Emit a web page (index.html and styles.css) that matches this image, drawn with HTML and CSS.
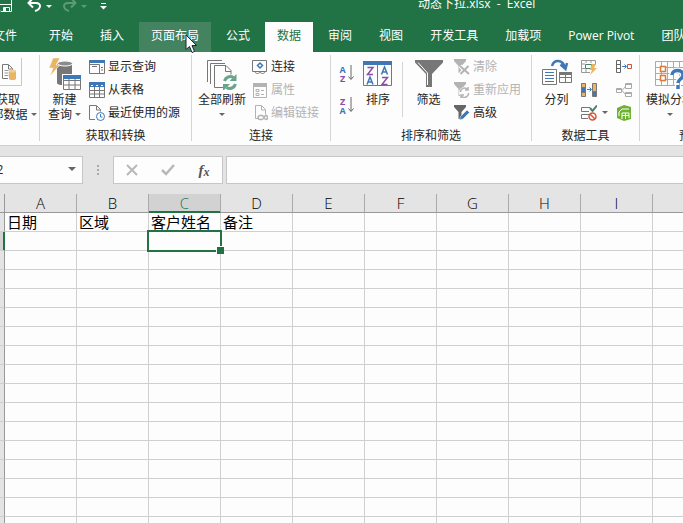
FILE: index.html
```html
<!DOCTYPE html>
<html lang="zh-CN">
  <head>
    <meta charset="utf-8" />
    <title>动态下拉.xlsx - Excel</title>
    <link rel="stylesheet" href="styles.css">
  </head>
  <body>
    <header class="titlebar">
      <div class="quick-access">
        <button class="quick-button" aria-label="保存">
          <svg width="12" height="12" viewBox="0 0 12 12" fill="none" stroke="#fff"><path d="M0 4.500h11.500V-1M11.500 4v7.500H1L0 10.500M3.500 11.500v-4h6v4" /><path d="M5 8v3" stroke-width="2" /></svg>
        </button>
        <button class="quick-button" aria-label="撤消">
          <svg width="15" height="12" viewBox="0 0 15 12" fill="none" stroke="#fff" stroke-width="2"><path d="M6-2 1.500 3 6 7.500M2 3h7c5.500 0 5.500 6-1 8" /></svg>
        </button>
        <span class="caret"></span>
        <button class="quick-button redo" aria-label="恢复" disabled>
          <svg width="15" height="12" viewBox="0 0 15 12" fill="none" stroke="#5d9a78" stroke-width="2"><path d="M9-2l4.500 5L9 7.500M13 3H6c-5.500 0-5.500 6 1 8" /></svg>
        </button>
        <span class="caret dim"></span>
        <button class="quick-button customize" aria-label="自定义快速访问工具栏">
          <svg width="7" height="7" viewBox="0 0 7 7"><path d="M1 .5h5" stroke="#fff" /><path d="M0 3h7L3.500 6.500z" fill="#fff" /></svg>
        </button>
      </div>
      <h1 class="doc-title">动态下拉.xlsx&nbsp; -&nbsp; Excel</h1>
    </header>

    <nav class="tabs">
      <button class="tab file">文件</button>
      <button class="tab">开始</button>
      <button class="tab">插入</button>
      <button class="tab hover">页面布局
        <svg class="cursor" width="14" height="20" viewBox="0 0 14 20"><path d="M1 1v14.500l3.500-3 2.500 6 2.500-1-2.500-6h4.500z" fill="#fff" stroke="#1b2430" /></svg>
      </button>
      <button class="tab">公式</button>
      <button class="tab active">数据</button>
      <button class="tab">审阅</button>
      <button class="tab">视图</button>
      <button class="tab">开发工具</button>
      <button class="tab">加载项</button>
      <button class="tab">Power Pivot</button>
      <button class="tab">团队</button>
    </nav>

    <main class="ribbon">
      <section class="group external">
        <div class="group-body">
          <button class="large">
            <svg width="28" height="32" viewBox="0 0 28 32"><path d="M.5-1.500h27v29H.5z" fill="#fdfdfd" stroke="#c8c8c8" /><g fill="none" stroke="#777"><path d="M14 20.500H8.500v-14h6l4 4v2M14.500 7v4h4" /><path d="M10.500 12.500h4M10.500 15h4M10.500 17.500h4" stroke="#999" /></g><path d="M15 13v7.500c0 2 7 2 7 0V13z" fill="#e8b564" /><ellipse cx="18.500" cy="13" rx="3.500" ry="1.500" fill="#f1cd91" /></svg>
            <span>获取</span>
            <span class="with-caret">外部数据<i class="caret"></i></span>
          </button>
        </div>
      </section>

      <section class="group transform">
        <div class="group-body">
          <button class="large">
            <svg width="32" height="32" viewBox="0 0 32 32"><path d="M8 6v19c0 3 15 3 15 0V6z" fill="#777" /><ellipse cx="16" cy="5.500" rx="7.500" ry="2.500" fill="#8b8b8b" stroke="#fff" /><path d="M4 0h7L7 7h4L1 18l3-8H0z" fill="#e8b564" stroke="#fff" stroke-width=".5" /><path d="M13 16h19v16H13z" fill="#fff" /><path d="M14.500 17.500h17v14h-17zM15 22.500h16M15 27h16M20 21v10M26 21v10" fill="none" stroke="#777" /><path d="M14 17h18v4H14z" fill="#3f78b5" /></svg>
            <span>新建</span>
            <span class="with-caret">查询<i class="caret"></i></span>
          </button>
          <div class="stack">
            <button class="small">
              <svg width="16" height="16" viewBox="0 0 16 16"><path d="M.5 1.500h15v13H.5zM1 5.500h9.500v9M3 7.500h5M12 8.500h2M12 11h2" fill="none" stroke="#777" /><path d="M0 1h16v3H0z" fill="#3f78b5" /></svg>
              显示查询
            </button>
            <button class="small">
              <svg width="16" height="16" viewBox="0 0 16 16"><path d="M.5 1.500h15v14H.5zM1 8.500h14M1 12h14M5.500 5v10M10.500 5v10" fill="none" stroke="#777" /><path d="M0 0h16v5H0z" fill="#3f78b5" /><path d="M2 3.500h2M7 3.500h2M12 3.500h2" stroke="#fff" /></svg>
              从表格
            </button>
            <button class="small">
              <svg width="16" height="16" viewBox="0 0 16 16" fill="none"><path d="M6 14.500H.5V.5h7l4 4v2M7.500 1v4h4" stroke="#777" /><circle cx="11.500" cy="11.500" r="4" stroke="#3f78b5" /><path d="M11.500 9v3h2" stroke="#3f78b5" /></svg>
              最近使用的源
            </button>
          </div>
        </div>
        <h2 class="group-label">获取和转换</h2>
      </section>

      <section class="group connections">
        <div class="group-body">
          <button class="large">
            <svg width="30" height="32" viewBox="0 0 30 32" fill="none"><path d="M.5 24V2.500H15M3.500 26V5.500H18M17 29.500H7.500V7.500H19l5 5v4M18.500 8v5.500H24" stroke="#777" /><path d="M17.500 23a6 6 0 0 1 9-3.500M28.500 26a6 6 0 0 1-9 3.500" stroke="#69a58d" stroke-width="3" /><path d="M29.500 16v7h-7zM16 33v-7h7z" fill="#69a58d" /></svg>
            <span>全部刷新</span>
            <span><i class="caret"></i></span>
          </button>
          <div class="stack">
            <button class="small">
              <svg width="16" height="16" viewBox="0 0 16 16" fill="none"><path d="M3 12.500H.5v-11h14v11H13M2 12.500h11M3 13c1 2 4 2 5 0 1 2 4 2 5 0" stroke="#777" /><path d="M8 4l2.500 2.500L8 9 5.500 6.500z" stroke="#3f78b5" stroke-width="1.500" /></svg>
              连接
            </button>
            <button class="small" disabled>
              <svg width="16" height="16" viewBox="0 0 16 16" fill="none" stroke="#b3b3b3"><path d="M1.500 1.500h13v14h-13z" /><path d="M1 3h14" stroke-width="4" /><path d="M4 7.500h3v2H4zM4 11.500h3v2H4zM9 8.500h3M9 12.500h3" /></svg>
              属性
            </button>
            <button class="small" disabled>
              <svg width="16" height="16" viewBox="0 0 16 16" fill="none" stroke="#b3b3b3"><path d="M6 13.500H3.500V.5h6l4 4v5M9.500 1v4h4" /><path d="M8 10.500h2c2 0 2 4 4 4s2-4 0-4-2 4-4 4H8c-2.500 0-2.500-4 0-4z" stroke-width="1.500" /></svg>
              编辑链接
            </button>
          </div>
        </div>
        <h2 class="group-label">连接</h2>
      </section>

      <section class="group sort">
        <div class="group-body">
          <div class="order-buttons">
            <button class="order" aria-label="升序">
              <span class="letters"><b>A</b><b class="violet">Z</b></span>
              <svg width="6" height="16" viewBox="0 0 6 16"><path d="M3 0v14M.5 11.500 3 14.500l2.500-3" fill="none" stroke="#666" /></svg>
            </button>
            <button class="order" aria-label="降序">
              <span class="letters"><b class="violet">Z</b><b>A</b></span>
              <svg width="6" height="16" viewBox="0 0 6 16"><path d="M3 0v14M.5 11.500 3 14.500l2.500-3" fill="none" stroke="#666" /></svg>
            </button>
          </div>
          <button class="large">
            <svg width="30" height="32" viewBox="0 0 30 32" fill="none" stroke-width="1.500"><path d="M.5 3.500h28v24H.5zM14.500 6v21" stroke="#777" stroke-width="1" /><path d="M0 3h29v4H0z" fill="#3f78b5" /><path d="M4.500 9.500H10l-5.500 7H10M19 19.500h5.500l-5.500 7h5.500" stroke="#8a4fa5" /><path d="M4 26.500l3-7.500 3 7.500M5 24h4M18.500 16.500l3-7.500 3 7.500M19.500 14h4" stroke="#3f78b5" /></svg>
            <span>排序</span>
          </button>
          <button class="large filter">
            <svg width="28" height="32" viewBox="0 0 28 32"><path d="M0 2h28v2.500L17 16v13h-6V16L0 4.500z" fill="#777" /><path d="M3 4.500l9.500 10.500v12" fill="none" stroke="#fff" /></svg>
            <span>筛选</span>
          </button>
          <div class="stack">
            <button class="small" disabled>
              <svg width="16" height="16" viewBox="0 0 16 16"><path d="M0 0h12v2L7.500 7v7h-3V7L0 2z" fill="#b3b3b3" /><path d="M6 7l9 8M14.500 7l-8 8" stroke="#fff" stroke-width="4" /><path d="M6 7l9 8M14.500 7l-8 8" stroke="#b3b3b3" stroke-width="2" /></svg>
              清除
            </button>
            <button class="small" disabled>
              <svg width="16" height="16" viewBox="0 0 16 16"><path d="M0 0h12v2L7.500 7v7h-3V7L0 2z" fill="#b3b3b3" /><circle cx="10.500" cy="10.500" r="5.500" fill="#fdfdfd" /><path d="M6.500 10a4 4 0 0 1 7-2.500M14.500 11a4 4 0 0 1-7 3M14 5v3h-3M7 16v-3h3" fill="none" stroke="#b3b3b3" stroke-width="1.500" /></svg>
              重新应用
            </button>
            <button class="small">
              <svg width="16" height="16" viewBox="0 0 16 16"><path d="M0 0h12v2L7.500 7v7h-3V7L0 2z" fill="#666" /><path d="M5.500 15l1-3.500L13 5l2.500 2.500L9 14z" fill="#3f78b5" stroke="#fff" stroke-width=".5" /></svg>
              高级
            </button>
          </div>
        </div>
        <h2 class="group-label">排序和筛选</h2>
      </section>

      <section class="group tools">
        <div class="group-body">
          <button class="large">
            <svg width="30" height="32" viewBox="0 0 30 32" fill="none"><path d="M.5 11.500h14v15H.5zM17.500 14.500h12v10h-12zM18 19.500h11M23.500 17v8" stroke="#777" /><path d="M17 15.500h13" stroke="#777" stroke-width="3" /><path d="M3 14.500h9M3 17.500h9M3 20.500h9M3 23.500h9" stroke="#3f78b5" /><path d="M10 8c2-7 11-7 13 2M18.500 6.500l5 4.500 1.500-6" stroke="#3f78b5" stroke-width="2.500" /></svg>
            <span>分列</span>
          </button>
          <div class="icon-grid">
            <button class="tool" aria-label="快速填充">
              <svg width="16" height="16" viewBox="0 0 16 16" fill="none"><path d="M9 13.500H.5v-12h14V6M1 5h3M1 9.500h3M5 2v2M10 2v2M5 10v3" stroke="#999" /><path d="M4.500 5.500h6v4h-6z" stroke="#47856b" /><path d="M11 5h4l-2 4h3l-7 7 2-5H8.500z" fill="#e8b564" /></svg>
            </button>
            <button class="tool" aria-label="合并计算">
              <svg width="16" height="16" viewBox="0 0 16 16" fill="none"><path d="M.5 1.500h4v12h-4zM1 5.500h3M1 9.500h3" stroke="#666" /><path d="M6 7.500h4M8.500 5.500l2 2-2 2" stroke="#3f78b5" /><path d="M11.500 5.500h4v4h-4z" stroke="#c9573b" /></svg>
            </button>
            <button class="tool" aria-label="删除重复项">
              <svg width="16" height="16" viewBox="0 0 16 16" fill="none"><path d="M.5 1.500h4v4h-4zM.5 10.500h4v4h-4z" fill="#e8b564" stroke="#777" /><path d="M.5 5.500h4v5h-4zM11.500 9.500h4v5h-4z" fill="#3f78b5" stroke="#777" /><path d="M11.500 1.500h4v8h-4z" fill="#e8b564" stroke="#777" /><path d="M6 7.500h4M8.500 5.500l2 2-2 2" stroke="#3f78b5" /></svg>
            </button>
            <button class="tool" aria-label="关系" disabled>
              <svg width="16" height="16" viewBox="0 0 16 16" fill="none" stroke="#aaa"><path d="M.5 6.500h5v4h-5zM9.500 1.500h6v5h-6zM9.500 10.500h6v4h-6zM6 8.500l3.500-4M6 8.500l3.500 4M1 7.500h4M10 2.500h5M10 11.500h5" /></svg>
            </button>
            <button class="tool" aria-label="数据验证">
              <svg width="16" height="16" viewBox="0 0 16 16" fill="none"><path d="M9 2.500H.5v4H8M8 9.500H.5v4H7" stroke="#777" /><path d="M9 3l2.500 3L16 .5" stroke="#47856b" stroke-width="2" /><circle cx="11.500" cy="11.500" r="3.500" stroke="#d65532" stroke-width="1.500" /><path d="M9 9l5 5" stroke="#d65532" stroke-width="1.500" /></svg>
              <i class="caret"></i>
            </button>
            <button class="tool" aria-label="管理数据模型">
              <svg width="16" height="16" viewBox="0 0 16 16"><path d="M1 3l7-3 7 2v12l-7 2-7-3z" fill="#6db330" /><path d="M3 11V7l3-3h7M6 14V8h7v5M6 10.500h7M9.500 8v6" fill="none" stroke="#fff" /></svg>
            </button>
          </div>
        </div>
        <h2 class="group-label">数据工具</h2>
      </section>

      <section class="group forecast">
        <div class="group-body">
          <button class="large">
            <svg width="30" height="32" viewBox="0 0 30 32" fill="none"><path d="M.5 3.500h29v24H.5zM1 9.500h28M1 15.500h28M1 21.500h28M6.500 4v23M12.500 4v23M18.500 4v23M24.500 4v23" stroke="#aaa" /><path d="M5.500 8.500h5v5h-5zM5.500 17.500h5v5h-5z" fill="#fff" stroke="#dc7a38" stroke-width="1.500" /><path d="M17 17c0-6 11-6 11 0 0 4-5 4-5 8M23 27v4" stroke="#fff" stroke-width="6" /><path d="M17 17c0-6 11-6 11 0 0 4-5 4-5 8M23 27v4" stroke="#3f78b5" stroke-width="3.500" /></svg>
            <span>模拟分析</span>
            <span><i class="caret"></i></span>
          </button>
        </div>
        <h2 class="group-label">预测</h2>
      </section>
    </main>

    <div class="formula-bar">
      <div class="name-box">
        <input class="name-input" type="text" value="C2" aria-label="名称框" />
        <button class="name-toggle" aria-label="展开名称框"><i class="caret"></i></button>
      </div>
      <span class="grip"></span>
      <div class="formula-buttons">
        <button aria-label="取消" disabled>
          <svg width="12" height="12" viewBox="0 0 12 12"><path d="M1 1l10 10M11 1L1 11" stroke="#b8b8b8" stroke-width="2" /></svg>
        </button>
        <button aria-label="输入" disabled>
          <svg width="14" height="12" viewBox="0 0 14 12"><path d="M1 6l4 4 8-9" fill="none" stroke="#b8b8b8" stroke-width="2.500" /></svg>
        </button>
        <button class="fx" aria-label="插入函数"><i>f</i><i class="fx-x">x</i></button>
      </div>
      <input class="formula-input" type="text" aria-label="编辑栏" />
    </div>

    <div class="sheet">
      <table class="cells">
        <thead></thead>
        <tbody></tbody>
      </table>
    </div>

    <script>
      const columns = ["A", "B", "C", "D", "E", "F", "G", "H", "I", "J"];
      const rowCount = 17;
      const firstRow = ["日期", "区域", "客户姓名", "备注"];
      // zero-based, C2
      const selected = { row: 1, column: 2 };

      const head = document.querySelector(".cells thead").insertRow();
      addHeader(head, "", "corner");
      columns.forEach((name, i) => {
        addHeader(head, name, i === selected.column ? "column current" : "column");
      });

      const body = document.querySelector(".cells tbody");
      for (let r = 0; r < rowCount; r++) {
        const row = body.insertRow();
        addHeader(row, "", r === selected.row ? "row-head current" : "row-head");
        for (let c = 0; c < columns.length; c++) {
          const cell = row.insertCell();
          if (r === 0 && firstRow[c]) {
            cell.textContent = firstRow[c];
          }
          if (r === selected.row && c === selected.column) {
            cell.className = "selected";
          }
        }
      }

      function addHeader(row, text, className) {
        const th = document.createElement("th");
        th.textContent = text;
        th.className = className;
        row.appendChild(th);
      }
    </script>
  </body>
</html>
```

FILE: styles.css
```css
* {
  box-sizing: border-box;
}

html,
body {
  margin: 0;
  height: 100%;
}

body {
  display: flex;
  flex-direction: column;
  overflow: hidden;
  background: #fdfdfd;
  color: #262626;
  font: 12px/16px "Open Sans", "Noto Sans CJK SC", sans-serif;
}

button,
input {
  margin: 0;
  padding: 0;
  border: 0;
  background: none;
  color: inherit;
  font: inherit;
}

h1,
h2 {
  margin: 0;
  font: inherit;
}

svg {
  display: block;
  flex: none;
}

.caret {
  display: inline-block;
  border: 3px solid transparent;
  border-top-color: #666;
  border-bottom: 0;
}

/* Title bar */

.titlebar {
  display: flex;
  flex: none;
  height: 22px;
  background: #217346;
  color: #fff;
}

.quick-access {
  display: flex;
  align-items: center;
  flex: none;
  width: 418px;
  height: 12px;
}

.quick-button + .quick-button {
  margin-left: 15px;
}

.quick-access .caret {
  margin: 0 10px 0 4px;
  border-top-color: #fff;
}

.quick-access .caret.dim {
  border-top-color: #5d9a78;
}

.customize {
  margin-left: 3px;
}

.doc-title {
  margin-top: -4px;
  white-space: nowrap;
}

/* Tabs */

.tabs {
  display: flex;
  flex: none;
  gap: 3px;
  height: 30px;
  margin-left: -24px;
  background: #217346;
}

.tab {
  flex: none;
  padding: 0 12px 2px;
  color: #fff;
  white-space: nowrap;
}

.tab.file {
  padding: 0 17px 2px;
}

.tab.hover {
  position: relative;
  background: #43835f;
}

.tab.active {
  background: #fdfdfd;
  color: #217346;
}

.cursor {
  position: absolute;
  left: 46px;
  top: 12px;
  z-index: 1;
}

/* Ribbon */

.ribbon {
  display: flex;
  flex: none;
  height: 94px;
  margin-left: -24px;
  padding-top: 3px;
  border-bottom: 1px solid #cfcfcf;
}

.group {
  flex: none;
  height: 86px;
  border-right: 1px solid #d4d4d4;
}

.group-body {
  display: flex;
  height: 69px;
}

.group-label {
  margin-top: 7px;
  line-height: 10px;
  text-align: center;
}

.large {
  display: flex;
  flex-direction: column;
  align-items: center;
  flex: none;
  padding-top: 3px;
  line-height: 15px;
  white-space: nowrap;
}

.large svg {
  margin-bottom: 2px;
}

.large .caret {
  vertical-align: 3px;
}

.with-caret .caret {
  margin-left: 3px;
}

.small {
  display: flex;
  align-items: center;
  gap: 3px;
  height: 23px;
  white-space: nowrap;
}

.small:disabled {
  color: #b3b3b3;
}

.external {
  width: 64px;
}

.external .large {
  width: 64px;
}

.transform {
  width: 152px;
}

.transform .large {
  width: 49px;
}

.connections {
  width: 139px;
}

.connections .large {
  width: 60px;
}

.sort {
  width: 201px;
}

.sort .large {
  width: 50px;
}

.sort .filter {
  width: 51px;
}

.order-buttons {
  display: flex;
  flex-direction: column;
  gap: 14px;
  width: 22px;
  padding: 10px 0 0 8px;
}

.order {
  display: flex;
  gap: 2px;
}

.letters b {
  display: block;
  width: 7px;
  color: #3f78b5;
  font-size: 9px;
  line-height: 9px;
}

.letters .violet {
  color: #8a4fa5;
}

.sort .large:not(.filter) {
  background: linear-gradient(#d4d4d4, #d4d4d4) right 7px / 1px 55px no-repeat;
}

.tools {
  width: 108px;
}

.tools .large {
  width: 49px;
}

.icon-grid {
  display: grid;
  grid-template-columns: 35px 16px;
  grid-template-rows: repeat(3, 23px);
}

.tool {
  display: flex;
  align-items: center;
  gap: 5px;
}

.forecast {
  width: 103px;
}

.forecast .large {
  width: 60px;
}

/* Formula bar */

.formula-bar {
  display: flex;
  flex: none;
  height: 48px;
  margin-left: -20px;
  padding: 10px 0;
  background: #e4e4e4;
}

.name-box,
.formula-buttons,
.formula-input {
  border: 1px solid #c6c6c6;
  background: #fdfdfd;
}

.name-box {
  display: flex;
  flex: none;
  width: 103px;
}

.name-input {
  flex: 1;
  min-width: 0;
  padding-left: 8px;
}

.name-toggle {
  width: 20px;
}

.name-toggle .caret {
  border-width: 4px 4px 0;
  vertical-align: 3px;
}

.grip {
  width: 2px;
  height: 10px;
  margin: 9px 14px;
  background: repeating-linear-gradient(#aaa 0 2px, transparent 2px 4px);
}

.formula-buttons {
  display: flex;
  flex: none;
  width: 110px;
  margin-right: 3px;
}

.formula-buttons button {
  display: flex;
  align-items: center;
  justify-content: center;
  flex: 1;
}

.fx {
  color: #555;
  font: bold 15px/18px "Liberation Serif", serif;
}

.fx-x {
  padding-top: 3px;
  font-size: 12px;
}

.formula-input {
  flex: 1;
  min-width: 0;
  border-right: 0;
}

/* Sheet */

.sheet {
  flex: 1;
  min-height: 0;
  overflow: hidden;
}

.cells {
  width: 725px;
  table-layout: fixed;
  border-spacing: 0;
  color: #000;
  font: 15px/18px "Noto Sans CJK SC", sans-serif;
}

.cells th,
.cells td {
  height: 19px;
  padding: 0;
  border-right: 1px solid #d0d0d0;
  border-bottom: 1px solid #d0d0d0;
}

.cells td {
  padding-left: 2px;
  white-space: nowrap;
}

.cells th {
  background: #e4e4e4;
  font-family: "Open Sans", sans-serif;
  font-weight: 300;
}

.cells .corner,
.cells .row-head {
  width: 5px;
  border-right-color: #999;
}

.cells .column,
.cells .corner {
  border-bottom-color: #999;
}

.cells .column {
  width: 72px;
  padding-top: 1px;
  border-right-color: #aaa;
  line-height: 17px;
}

.cells .column.current {
  background: #d2d2d2;
  box-shadow: inset 0 -1px #217346;
  border-bottom-color: #217346;
  color: #217346;
}

.cells .row-head.current {
  background: #d2d2d2;
  box-shadow: inset -1px 0 #217346;
  border-right-color: #217346;
}

.selected {
  position: relative;
}

.selected::before {
  content: "";
  position: absolute;
  inset: -2px;
  border: 2px solid #217346;
}

.selected::after {
  content: "";
  position: absolute;
  right: -4px;
  bottom: -4px;
  width: 7px;
  height: 7px;
  border: solid #fdfdfd;
  border-width: 1px 0 0 1px;
  background: #217346;
}
```
